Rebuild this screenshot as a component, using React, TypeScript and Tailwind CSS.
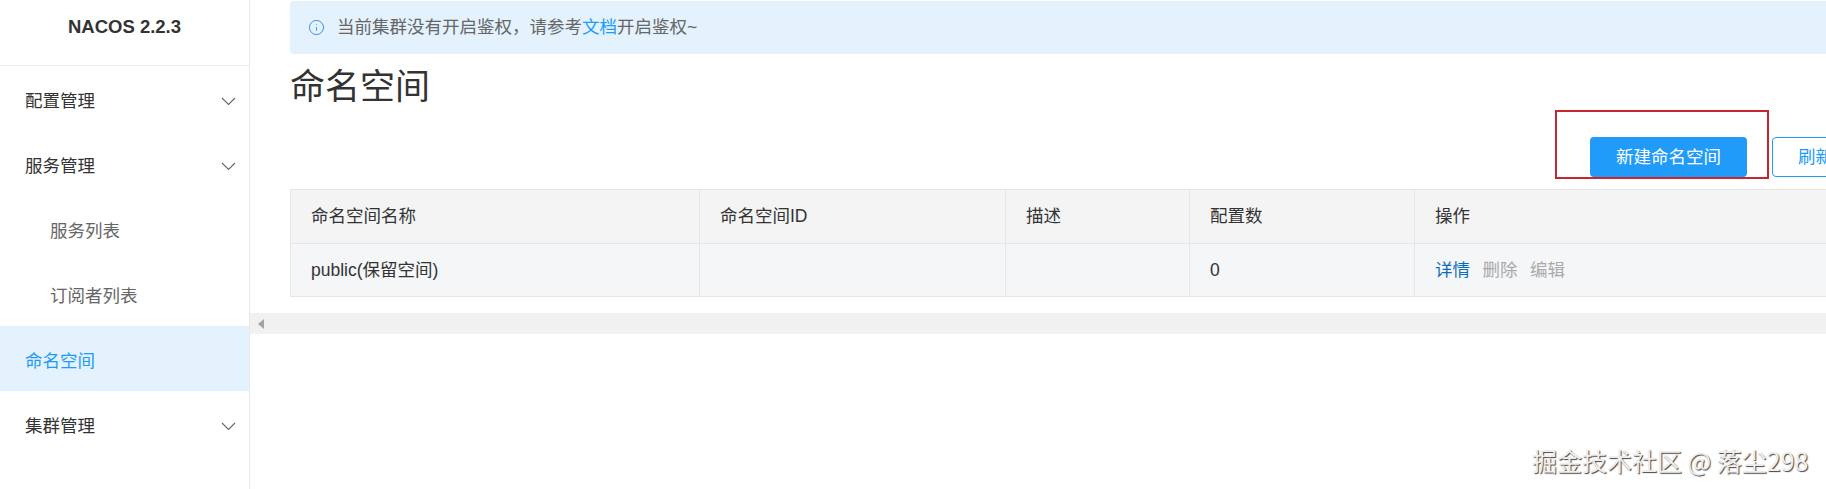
import { Info } from 'lucide-react';

const menu = [
  { label: '配置管理', arrow: true },
  { label: '服务管理', arrow: true },
  { label: '服务列表', sub: true },
  { label: '订阅者列表', sub: true },
  { label: '命名空间', active: true },
  { label: '集群管理', arrow: true },
];

function Chevron() {
  return (
    <svg width="15" height="9" viewBox="0 0 15 9" fill="none" stroke="#666" strokeWidth="1.1">
      <path d="M1 1l6.5 6.5L14 1" />
    </svg>
  );
}

function Sidebar() {
  return (
    <aside className="w-[250px] shrink-0 border-r border-[#e9e9e9] bg-white">
      <div className="flex h-[66px] items-center justify-center border-b border-[#eeeeee] pb-[12px] text-[18.5px] font-bold text-[#333]">
        NACOS 2.2.3
      </div>
      <ul>
        {menu.map((m) => {
          let tone = 'pl-[25px] text-[#333]';
          if (m.sub) tone = 'pl-[50px] text-[#666]';
          if (m.active) tone = 'pl-[25px] bg-[#e3f2fd] text-[#209bfa]';
          return (
            <li key={m.label} className={'flex h-[65px] items-center justify-between pr-[13px] pt-[5px] ' + tone}>
              <span>{m.label}</span>
              {m.arrow && <Chevron />}
            </li>
          );
        })}
      </ul>
    </aside>
  );
}

function NamespaceTable() {
  const th = 'h-[54px] border border-[#e6e6e6] pl-[20px] text-left font-normal text-[#333]';
  const td = 'h-[53px] border border-[#e6e6e6] pl-[20px] text-[#333]';
  return (
    <table className="w-full table-fixed border-collapse">
      <colgroup>
        <col className="w-[409px]" />
        <col className="w-[306px]" />
        <col className="w-[184px]" />
        <col className="w-[225px]" />
        <col />
      </colgroup>
      <thead className="bg-[#f4f4f5]">
        <tr>
          <th className={th}>命名空间名称</th>
          <th className={th}>命名空间ID</th>
          <th className={th}>描述</th>
          <th className={th}>配置数</th>
          <th className={th}>操作</th>
        </tr>
      </thead>
      <tbody className="bg-[#f5f6f8]">
        <tr>
          <td className={td}>public(保留空间)</td>
          <td className={td}></td>
          <td className={td}></td>
          <td className={td}>0</td>
          <td className={td}>
            <div className="flex gap-[12.5px]">
              <span className="text-[#0a6ebd]">详情</span>
              <span className="text-[#aaaaaa]">删除</span>
              <span className="text-[#aaaaaa]">编辑</span>
            </div>
          </td>
        </tr>
      </tbody>
    </table>
  );
}

export default function App() {
  return (
    <div className="relative flex h-[489px] w-[1826px] overflow-hidden bg-white font-['Liberation_Sans','Noto_Sans_CJK_SC',sans-serif] text-[17.5px]">
      <Sidebar />
      <main className="min-w-0 flex-1 overflow-hidden">
        <div className="w-[1609px] pl-[40px] pt-[1px]">
          <div className="flex h-[53px] items-center gap-[12px] rounded-[4px] bg-[#e3f2fd] pl-[18px] text-[#666]">
            <Info size={17} strokeWidth={1.4} className="text-[#3b8ee8]" />
            <span>
              当前集群没有开启鉴权，请参考<span className="text-[#209bfa]">文档</span>开启鉴权~
            </span>
          </div>
          <h1 className="mt-[6px] h-[54px] text-[35px] leading-[54px] font-normal text-[#333]">命名空间</h1>
          <div className="mt-[23px] flex justify-end gap-[25px]">
            <button className="h-[40px] w-[157px] rounded-[4px] bg-[#209bfa] text-white">新建命名空间</button>
            <button className="h-[40px] w-[87px] rounded-[4px] border border-[#209bfa] bg-white text-[#209bfa]">刷新</button>
          </div>
          <div className="mt-[12px]">
            <NamespaceTable />
          </div>
        </div>
        <div className="mt-[16px] flex h-[21px] items-center bg-[#f1f1f1] pl-[8px]">
          <svg width="6" height="10" viewBox="0 0 6 10">
            <path d="M6 0v10L0 5z" fill="#a3a3a3" />
          </svg>
        </div>
      </main>
      <div className="absolute left-[1555px] top-[110px] h-[69px] w-[214px] border-2 border-[#c9252f]" />
      <div className="absolute left-[1532px] top-[443px] text-[25px] leading-[34px] text-[#eeeeee] [text-shadow:1px_1px_1px_#444] font-['Noto_Sans_CJK_SC',sans-serif]">
        掘金技术社区 @ 落尘298
      </div>
    </div>
  );
}
